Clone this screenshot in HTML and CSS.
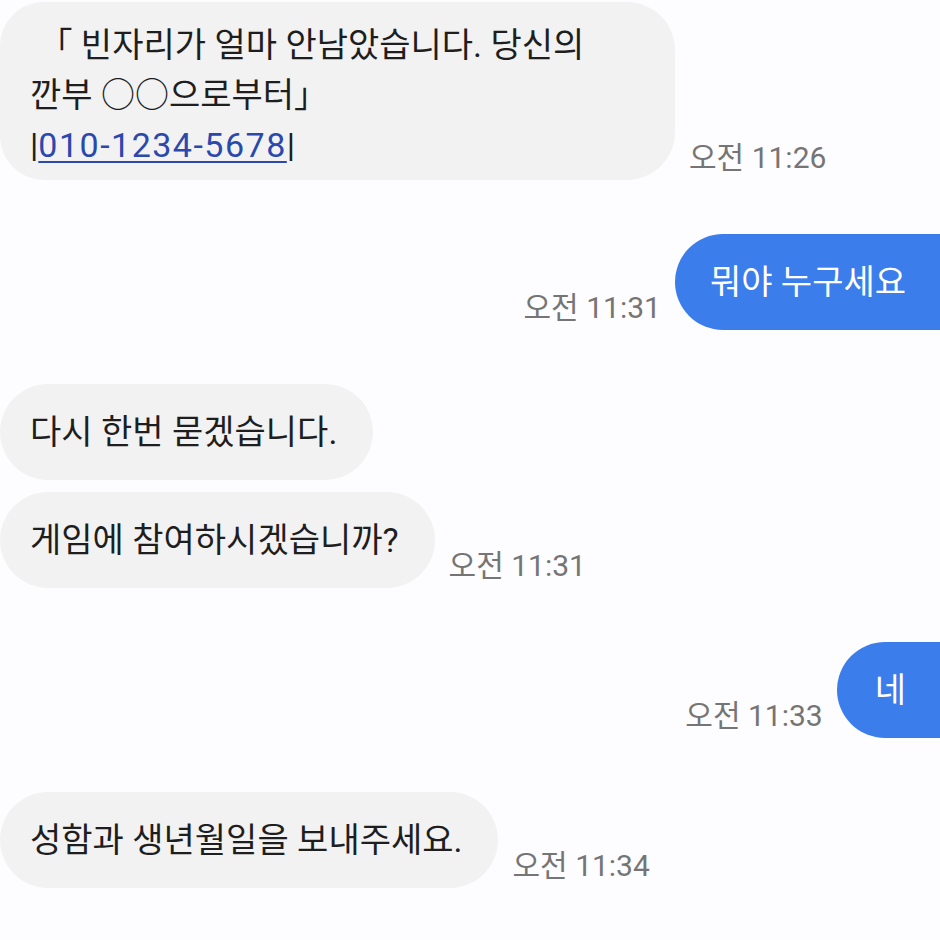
FILE: index.html
```html
<!DOCTYPE html>
<html lang="ko">
<head>
    <meta charset="UTF-8">
    <title>메시지</title>
    <link rel="stylesheet" href="styles.css">
</head>
<body>
    <div class="chat">
        <!-- 받은 메시지 -->
        <div class="row in">
            <div class="bubble long">
                &nbsp;「 빈자리가 얼마 안남았습니다. 당신의<br>
                깐부 ○○으로부터」<br>
                |<a href="#" class="tel">010-1234-5678</a>|
            </div>
            <span class="time">오전 11:26</span>
        </div>

        <div class="row out gap">
            <span class="time">오전 11:31</span>
            <div class="bubble blue">뭐야 누구세요</div>
        </div>

        <div class="row in gap">
            <div class="bubble">다시 한번 묻겠습니다.</div>
        </div>
        <div class="row in small-gap">
            <div class="bubble">게임에 참여하시겠습니까?</div>
            <span class="time">오전 11:31</span>
        </div>

        <div class="row out gap">
            <span class="time">오전 11:33</span>
            <div class="bubble blue round">네</div>
        </div>

        <div class="row in gap">
            <div class="bubble">성함과 생년월일을 보내주세요.</div>
            <span class="time">오전 11:34</span>
        </div>
    </div>
</body>
</html>
```

FILE: styles.css
```css
body {
    font-family: Roboto, "Noto Sans CJK KR", sans-serif;
    margin: 0;
    padding: 0;
    background-color: #fdfdff;
    color: #1e1e1e;
}
.chat {
    display: flex;
    flex-direction: column;
    padding-top: 2px;
}
.row {
    display: flex;
    align-items: flex-end;
    gap: 14px;
}
.row.out {
    justify-content: flex-end;
}
.row.gap {
    margin-top: 54px;
}
.row.small-gap {
    margin-top: 12px;
}
.bubble {
    background-color: #f2f2f3;
    font-size: 34px;
    line-height: 50px;
    height: 96px;
    box-sizing: border-box;
    padding: 23px 36px 23px 30px;
    border-radius: 48px;
    white-space: nowrap;
}
.bubble.long {
    width: 675px;
    height: 178px;
    padding: 18px 30px 10px 30px;
    border-radius: 44px 48px 48px 44px;
}
.bubble.blue {
    background-color: #3b7deb;
    color: white;
    padding: 23px 34px 23px 35px;
    border-radius: 48px 0 0 48px;
}
.bubble.round {
    padding-left: 38px;
}
.tel {
    color: #2b48ad;
    letter-spacing: 1.5px;
    text-decoration: underline;
    text-decoration-thickness: 2px;
    text-underline-offset: 4px;
}
.time {
    font-size: 30px;
    color: #757575;
    padding-bottom: 3px;
    white-space: nowrap;
}
```
